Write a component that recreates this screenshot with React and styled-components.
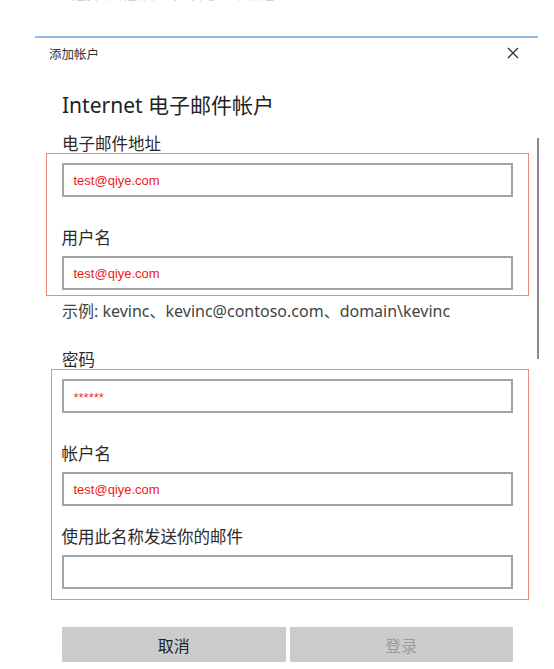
import styled, { createGlobalStyle } from 'styled-components';

const FIELDS_TOP = [
  { label: '电子邮件地址', value: 'test@qiye.com' },
  { label: '用户名', value: 'test@qiye.com' },
];

const FIELDS_BOTTOM = [
  { label: '密码', value: '******', password: true },
  { label: '帐户名', value: 'test@qiye.com', gap: '30px' },
  { label: '使用此名称发送你的邮件', value: '', gap: '20px' },
];

function CloseIcon() {
  return (
    <svg width="12" height="12" viewBox="0 0 12 12">
      <path d="M1 1 L11 11 M11 1 L1 11" stroke="#333" strokeWidth="1.3" fill="none" />
    </svg>
  );
}

function Field({ value, password }) {
  return (
    <S.Input>
      {password ? <S.Stars>{value}</S.Stars> : <S.Value>{value}</S.Value>}
    </S.Input>
  );
}

function App() {
  return (
    <>
      <Global />
      <S.Page>
        <S.Caption>
          <span>2、选择“其他帐户”，填写以下信息</span>
        </S.Caption>
        <S.Dialog>
          <S.Header>
            <S.Title>添加帐户</S.Title>
            <S.Close>
              <CloseIcon />
            </S.Close>
          </S.Header>
          <S.Scrollbar />
          <S.Body>
            <S.Heading>Internet 电子邮件帐户</S.Heading>
            <S.Label mt={'14px'}>{FIELDS_TOP[0].label}</S.Label>
            <S.Highlight left={'16px'}>
              <Field value={FIELDS_TOP[0].value} />
              <S.Label mt={'30px'}>{FIELDS_TOP[1].label}</S.Label>
              <S.Gap />
              <Field value={FIELDS_TOP[1].value} />
            </S.Highlight>
            <S.Hint>示例: kevinc、kevinc@contoso.com、domain\kevinc</S.Hint>
            <S.Label mt={'28px'}>{FIELDS_BOTTOM[0].label}</S.Label>
            <S.Highlight left={'11px'} bottom={'10px'}>
              <Field value={FIELDS_BOTTOM[0].value} password />
              {FIELDS_BOTTOM.slice(1).map((f) => (
                <div key={f.label}>
                  <S.Label mt={f.gap}>{f.label}</S.Label>
                  <S.Gap />
                  <Field value={f.value} />
                </div>
              ))}
            </S.Highlight>
            <S.Buttons>
              <S.Button>取消</S.Button>
              <S.Button disabled>登录</S.Button>
            </S.Buttons>
          </S.Body>
        </S.Dialog>
      </S.Page>
    </>
  );
}
export default App;

const Global = createGlobalStyle`
  body {
    margin: 0;
    background: #fff;
    font-family: "Noto Sans", "Noto Sans CJK SC", sans-serif;
  }
`;

const Page = styled.div`
  width: 554px;
  height: 669px;
  overflow: hidden;
  background: #fff;
`;

const Caption = styled.div`
  height: 3px;
  overflow: hidden;
  padding-left: 48px;
  span {
    display: block;
    margin-top: -15px;
    font-size: 15px;
    line-height: 17px;
    color: #d0d0d0;
  }
`;

const Dialog = styled.div`
  position: relative;
  margin: 33px 0 0 35px;
  width: 503px;
  border-top: 2px solid #8dbbe4;
`;

const Header = styled.div`
  display: flex;
  align-items: center;
  justify-content: space-between;
  height: 30px;
  padding: 0 19px 0 14px;
`;

const Title = styled.div`
  font-family: "Noto Sans CJK SC", sans-serif;
  font-size: 12.5px;
  color: #333;
`;

const Close = styled.div`
  display: flex;
  align-items: center;
`;

const Scrollbar = styled.div`
  position: absolute;
  right: -1px;
  top: 100px;
  width: 2px;
  height: 221px;
  background: #8a8a8a;
`;

const Body = styled.div`
  display: flex;
  flex-direction: column;
  padding: 23px 25px 0 27px;
`;

const Heading = styled.div`
  font-size: 21px;
  line-height: 28px;
  color: #222;
`;

const Label = styled.div`
  font-family: "Noto Sans CJK SC", sans-serif;
  font-size: 16.5px;
  line-height: 20px;
  color: #2a2a2a;
  margin-top: ${({ mt }) => mt || '0'};
`;

const Gap = styled.div`
  height: 9px;
`;

const Highlight = styled.div`
  display: flex;
  flex-direction: column;
  margin: 0 -16px 0 -${({ left }) => left};
  padding: 9px 15px ${({ bottom }) => bottom || '5px'} calc(${({ left }) => left} - 1.5px);
  border: 1.5px solid #f4877c;
`;

const Input = styled.div`
  display: flex;
  align-items: center;
  height: 34px;
  box-sizing: border-box;
  border: 2px solid #a3a3a3;
  padding-left: 10px;
  background: #fff;
`;

const Value = styled.span`
  font-family: "Liberation Sans", Arial, sans-serif;
  font-size: 13px;
  color: #f01818;
`;

const Stars = styled.span`
  font-family: "Liberation Sans", Arial, sans-serif;
  font-size: 13px;
  color: #f03030;
  margin-top: 3px;
`;

const Hint = styled.div`
  margin-top: 5px;
  font-size: 16px;
  line-height: 20px;
  color: #444;
`;

const Buttons = styled.div`
  display: grid;
  grid-template-columns: 1fr 1fr;
  gap: 4px;
  margin-top: 27px;
`;

const Button = styled.button`
  height: 35px;
  border: none;
  background: #cccccc;
  font-family: "Noto Sans CJK SC", sans-serif;
  font-size: 16px;
  color: #222;
  &:disabled {
    color: #9a9a9a;
  }
`;

const S = {
  Page,
  Caption,
  Dialog,
  Header,
  Title,
  Close,
  Scrollbar,
  Body,
  Heading,
  Label,
  Gap,
  Highlight,
  Input,
  Value,
  Stars,
  Hint,
  Buttons,
  Button,
};
